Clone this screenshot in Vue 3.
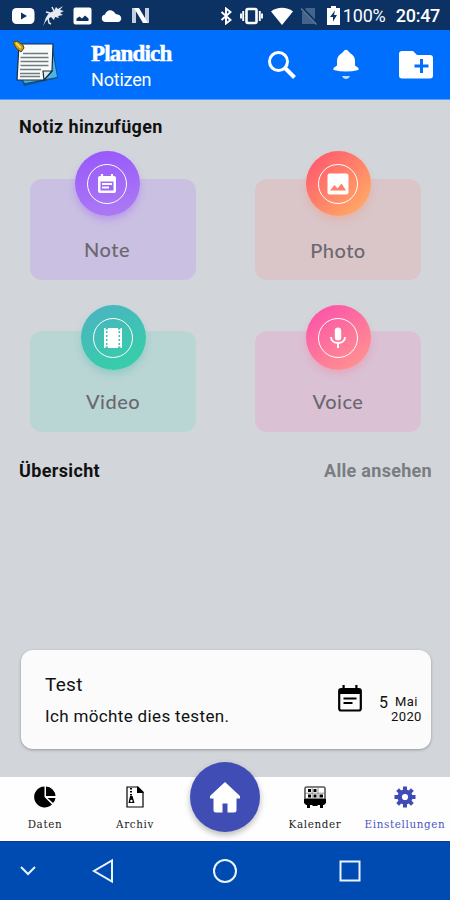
<template>
  <div class="phone">
    <div class="statusbar">
      <div class="status-left">
        <svg width="23" height="18" viewBox="0 0 23 18"><rect x="0" y="1" width="22.500" height="16" rx="4.500" fill="#fff" /><path d="M9 5.500v7l6-3.500z" fill="#0c3163" /></svg>
        <svg width="24" height="24" viewBox="0 0 24 24">
          <path d="M1 22C3 18 3 14 5 12C7 8 10 8 12 7L14 3L16 5L21 2L18 6L22 7L18 9L21 11L16 12L17 14L13 13L12 16L9 13L6 15L4 17Z" fill="#e6ebf2" />
          <path d="M6 14l1 5 2 1M8 9L4 8M12 7l-2-4" stroke="#e6ebf2" stroke-width="1.500" fill="none" />
        </svg>
        <svg width="19" height="18" viewBox="0 0 19 18"><rect x="0.500" y="0.500" width="18" height="17" rx="2" fill="#fff" /><path d="M3.500 14v-2.500l3-2 2.500 2 3-3 3.500 3V14z" fill="#0c3163" /></svg>
        <svg width="21" height="14" viewBox="0 0 21 14"><path d="M4 13a3.800 3.800 0 0 1 0-7.500C5.500 1 11-1 15 5.300c6 0 7 6.500 2.500 7.700z" fill="#fff" /></svg>
        <svg width="20" height="17" viewBox="0 0 20 17"><path d="M1 1h4v15H1zM14 1h4v15h-4z" fill="#c3cfdd" /><path d="M3 1h5l9 15h-5z" fill="#fff" /></svg>
      </div>
      <div class="status-right">
        <svg class="bt" width="12" height="18" viewBox="0 0 12 18"><path d="M1.500 5l9 8L6 16.500v-15L10.500 5l-9 8" fill="none" stroke="#fff" stroke-width="1.900" /></svg>
        <svg class="vib" width="23" height="18" viewBox="0 0 23 18"><rect x="6.500" y="2" width="10" height="14" rx="1.500" fill="none" stroke="#fff" stroke-width="2.600" /><path d="M3.200 4v10M1 6.500v5M19.800 4v10M22 6.500v5" stroke="#fff" stroke-width="1.900" /></svg>
        <svg class="wifi" width="22" height="18" viewBox="0 0 22 18"><path d="M0 4.500C6-.5 16-.5 22 4.500L11 18z" fill="#fff" /></svg>
        <svg class="sim" width="17" height="18" viewBox="0 0 17 18"><path d="M5 1h9v16H1V5z" fill="#46648b" /><path d="M1 1l15 16" stroke="#0c3163" stroke-width="3" /><path d="M0 1.500l15.500 16" stroke="#617a9b" stroke-width="1.500" /></svg>
        <svg class="bat" width="13" height="19" viewBox="0 0 13 19"><path d="M4 0h5v2h4v17H0V2h4z" fill="#fff" /><path d="M8 4.500L3 11h3v4.500L10 9H7z" fill="#0c3163" /></svg>
        <span class="percent">100%</span>
        <span class="clock">20:47</span>
      </div>
    </div>

    <header class="header">
      <svg class="logo" width="50" height="50" viewBox="0 0 50 50">
        <path d="M40 8l5 30-34 8-3-7z" fill="#1b4f80" />
        <path d="M39 9l5 28-32 6-3-4z" fill="#46b6ea" />
        <path d="M6 4h34l-1 27-8 9H4z" fill="#f7fcfb" stroke="#1c2c3d" stroke-width="1.200" />
        <path d="M31 40l-1-9 9 0z" fill="#dce9ec" stroke="#1c2c3d" stroke-width="1.200" />
        <path d="M10 13.500h25M7.500 17.500h28M7.500 21.500h28M7.500 25.500h28M7 29.500h21M7 33.500h20M7 36.500h20" stroke="#727a7e" stroke-width="1.300" />
        <path d="M0 2l4-1 6 4 1 3-3 4-5-4z" fill="#c99b10" stroke="#524713" stroke-width="1" />
        <path d="M3 3l5 5" stroke="#f6dc56" stroke-width="1.800" />
      </svg>
      <div class="titles">
        <div class="brand">Plandich</div>
        <div class="subtitle">Notizen</div>
      </div>
      <div class="actions">
        <svg width="30" height="30" viewBox="0 0 30 30" fill="none" stroke="#fff"><circle cx="11.500" cy="11.500" r="9" stroke-width="3" /><path d="M18 18l9.500 9.500" stroke-width="4" /></svg>
        <svg width="28" height="32" viewBox="0 0 28 32" fill="#fff"><path d="M14 .8c1.800 0 2.500 2 4 3.200C21 6 23 8 23 12v4.500l3.500 2.500v2Q20 22.500 14 22.500T1.500 21v-2L5 16.500V12c0-4 2-6 5-8 1.500-1.200 2.200-3.200 4-3.200z" /><path d="M10 27h8c-1.500 4-6.500 4-8 0z" fill="#bcdcff" /></svg>
        <svg width="36" height="30" viewBox="0 0 36 30"><path d="M4 1h11l4 4h13a3 3 0 0 1 3 3v17.500a3 3 0 0 1-3 3H4a3 3 0 0 1-3-3V4a3 3 0 0 1 3-3z" fill="#fff" /><path d="M23.500 9v14M16.500 16h14" stroke="#006ffd" stroke-width="3" /></svg>
      </div>
    </header>

    <main class="content">
      <h2 class="heading">Notiz hinzufügen</h2>
      <div class="tiles">
        <div v-for="tile in tiles" :key="tile.id" class="tile" :class="tile.id">
          <div class="bubble">
            <div class="ring">
              <svg v-if="tile.id === 'note'" width="20" height="22" viewBox="0 0 20 22"><path d="M3 3h14a2 2 0 0 1 2 2v13a2 2 0 0 1-2 2H3a2 2 0 0 1-2-2V5a2 2 0 0 1 2-2z" fill="#fff" /><path d="M5 1v4M15 1v4" stroke="#fff" stroke-width="2.200" /><path d="M3.500 8.500h13v9h-13z" fill="#a166f8" /><path d="M5 11h10M5 14.500h7" stroke="#fff" stroke-width="1.800" /></svg>
              <svg v-else-if="tile.id === 'photo'" width="22" height="22" viewBox="0 0 22 22"><rect x="0.500" y="0.500" width="21" height="21" rx="2" fill="#fff" /><path d="M3 17.500l4.500-5.500 3 3.500 4-5 4.500 7z" fill="#ff8066" /></svg>
              <svg v-else-if="tile.id === 'video'" width="18" height="20" viewBox="0 0 18 20"><path d="M0 0h1.500v1.500H4V0h10v1.500h2.500V0H18v20h-1.500v-1.500H14V20H4v-1.500H1.500V20H0z" fill="#fff" /><path d="M2.700 3v15M15.300 3v15" stroke="#3fc6b5" stroke-width="1.600" stroke-dasharray="2 2" /></svg>
              <svg v-else width="16" height="22" viewBox="0 0 16 22"><rect x="4.800" y="0.500" width="6.400" height="13" rx="3.200" fill="#fff" /><path d="M1 10c0 8 14 8 14 0M8 16v5" fill="none" stroke="#fff" stroke-width="1.900" /></svg>
            </div>
          </div>
          <span class="label">{{ tile.label }}</span>
        </div>
      </div>
      <div class="overview">
        <h2 class="heading">Übersicht</h2>
        <span class="all">Alle ansehen</span>
      </div>
      <article class="entry">
        <div class="entry-text">
          <div class="entry-title">Test</div>
          <div class="entry-body">Ich möchte dies testen.</div>
        </div>
        <svg class="entry-icon" width="24" height="27" viewBox="0 0 24 27"><rect x="1.200" y="4" width="21.600" height="21.500" rx="2" fill="none" stroke="#000" stroke-width="2.200" /><path d="M1 4h22v5H1zM4.500 0h2.200v4H4.500zM17.300 0h2.200v4h-2.200z" /><path d="M5.500 13.500h13M5.500 18h9" stroke="#000" stroke-width="2" /></svg>
        <span class="day">5</span>
        <div class="date"><span>Mai</span><span>2020</span></div>
      </article>
    </main>

    <nav class="tabs">
      <div class="tab">
        <svg width="22" height="22" viewBox="0 0 22 22"><path d="M10.500 .5V11l7.500 7.500A10.500 10.500 0 1 1 10.500 .5z" /><path d="M12 .5A10 10 0 0 1 21.500 10H12zM13.500 12h8a9 9 0 0 1-2.500 5z" /></svg>
        <span>Daten</span>
      </div>
      <div class="tab">
        <svg width="20" height="22" viewBox="0 0 20 22"><path d="M2 1h11l5 5v15H2z" fill="#fff" stroke="#000" stroke-width="1.200" /><path d="M12 0l7 7h-7z" /><path d="M6 2v10" stroke="#000" stroke-width="2" stroke-dasharray="1.500 1.500" /><path d="M5 10h2.500l2 7h-6z" /><circle cx="6.400" cy="15" r="1.200" fill="#fff" /></svg>
        <span>Archiv</span>
      </div>
      <div class="tab home">
        <div class="fab">
          <svg width="32" height="32" viewBox="0 0 32 32"><path d="M16 1L1 15v2.500h3.500V29a2.500 2.500 0 0 0 2.500 2.500h6.500v-9h5v9H25a2.500 2.500 0 0 0 2.500-2.500V17.500H31V15z" fill="#fff" /></svg>
        </div>
      </div>
      <div class="tab">
        <svg width="22" height="22" viewBox="0 0 22 22"><path d="M2.500 1h17a1.500 1.500 0 0 1 1.500 1.500V13H1V2.500A1.500 1.500 0 0 1 2.500 1z" fill="#fff" stroke="#555" stroke-width="1.600" /><path d="M4 3h3v3H4zM9.500 3h3v3h-3zM4 8.500h3v3H4zM9.500 8.500h3v3h-3zM15.500 8.500h3.500v3h-3.500zM0 13h22v4l-2 2h-1v3h-3v-3h-2l-1 1H9l-1-1H6v3H3v-3H2l-2-2z" /><path d="M8.200 2v11M14 2v11M2 7.200h18" stroke="#888" stroke-width="0.900" /></svg>
        <span>Kalender</span>
      </div>
      <div class="tab active">
        <svg width="22" height="22" viewBox="0 0 22 22"><g stroke="#3f4cb8" stroke-width="4"><path d="M11 .5v21M.5 11h21M3.600 3.600l14.800 14.800M3.600 18.400L18.400 3.600" /></g><circle cx="11" cy="11" r="7.600" fill="#3f4cb8" /><circle cx="11" cy="11" r="3.100" fill="#fff" /></svg>
        <span>Einstellungen</span>
      </div>
    </nav>

    <div class="sysnav">
      <svg class="sys-down" width="16" height="10" viewBox="0 0 16 10"><path d="M1 1l7 7 7-7" /></svg>
      <svg class="sys-back" width="22" height="26" viewBox="0 0 22 26"><path d="M20 2.500v21L2 13z" /></svg>
      <svg class="sys-home" width="26" height="26" viewBox="0 0 26 26"><circle cx="13" cy="13" r="11" /></svg>
      <svg class="sys-recent" width="22" height="22" viewBox="0 0 22 22"><rect x="1.500" y="1.500" width="19" height="19" /></svg>
    </div>
  </div>
</template>

<script setup>
const tiles = [
  { id: 'note', label: 'Note' },
  { id: 'photo', label: 'Photo' },
  { id: 'video', label: 'Video' },
  { id: 'voice', label: 'Voice' }
]
</script>

<style>
body {
  margin: 0;
  background: #d2d6db;
}
</style>

<style scoped>
/* ═══ Shell ═══ */
.phone {
  width: 450px;
  height: 900px;
  display: flex;
  flex-direction: column;
  overflow: hidden;
  background: #d2d6db;
  font-family: Roboto, sans-serif;
  color: #111;
}

svg {
  display: block;
  flex: none;
}

/* ═══ Status bar ═══ */
.statusbar {
  height: 30px;
  flex: none;
  display: flex;
  justify-content: space-between;
  align-items: center;
  box-sizing: border-box;
  padding: 1px 10px 0 12px;
  background: #0c3163;
  color: #fff;
}

.status-left,
.status-right {
  display: flex;
  align-items: center;
}

.status-left {
  gap: 9px;
}

.status-left svg:nth-child(2) {
  margin: 0 -2px 0 -2px;
}

.bt { margin-right: 8px; }
.vib { margin-right: 8px; }
.wifi { margin-right: 8px; }
.sim { margin-right: 9px; }
.bat { margin-right: 3px; }

.percent {
  font-size: 18px;
  line-height: 20px;
  letter-spacing: -0.2px;
  width: 53px;
}

.clock {
  font-size: 18px;
  line-height: 20px;
  font-weight: 500;
  letter-spacing: -0.3px;
}

/* ═══ Header ═══ */
.header {
  height: 70px;
  flex: none;
  display: flex;
  box-sizing: border-box;
  padding: 10px 16px 0 13px;
  border-bottom: 1px solid #5b9df0;
  background: #006ffd;
  color: #fff;
}

.titles {
  margin-left: 28px;
}

.brand {
  font: bold 23px/28px 'Liberation Serif', serif;
  letter-spacing: -0.8px;
  -webkit-text-stroke: 0.5px #fff;
}

.subtitle {
  margin-top: 1px;
  font-size: 18px;
  line-height: 22px;
  letter-spacing: -0.2px;
}

.actions {
  margin: 9px 0 0 auto;
  display: flex;
  align-items: center;
  height: 32px;
  gap: 35px;
}

.actions svg:nth-child(2) {
  margin-right: 3px;
}

/* ═══ Content ═══ */
.content {
  flex: 1;
  min-height: 0;
  display: flex;
  flex-direction: column;
}

.heading {
  margin: 0;
  font-size: 18px;
  line-height: 22px;
  font-weight: 700;
  letter-spacing: 0.35px;
}

.content > .heading {
  padding: 16px 0 0 19px;
}

.tiles {
  display: grid;
  grid-template-columns: 166px 166px;
  grid-template-rows: 101px 101px;
  gap: 51px 59px;
  margin: 41px 0 0 30px;
}

.tile {
  display: flex;
  flex-direction: column;
  align-items: center;
  border-radius: 12px;
}

.bubble {
  width: 65px;
  height: 65px;
  margin-top: -28px;
  display: flex;
  align-items: center;
  justify-content: center;
  border-radius: 50%;
}

.ring {
  width: 38px;
  height: 38px;
  display: flex;
  align-items: center;
  justify-content: center;
  border: 1.5px solid #fff;
  border-radius: 50%;
}

.label {
  margin-top: 21px;
  font-family: Lato, sans-serif;
  font-size: 20px;
  font-weight: 500;
  line-height: 24px;
  letter-spacing: 0.5px;
  color: #6b6870;
}

.note { background: #cac0e2; padding-right: 12px; width: 154px; }
.photo { background: #dac5c9; }
.video { background: #b9d5d4; }
.voice { background: #dac1d3; }

.note .bubble { background: linear-gradient(170deg, #9757fb, #ad7cf3); box-shadow: 0 4px 7px rgba(158, 100, 248, 0.4); }
.photo .bubble { background: linear-gradient(135deg, #ff5f6d 15%, #ffaa64 90%); box-shadow: 0 4px 7px rgba(255, 140, 100, 0.3); }
.video .bubble { background: linear-gradient(155deg, #49b5c0 10%, #36cfa8 90%); box-shadow: 0 4px 7px rgba(60, 180, 165, 0.3); }
.voice .bubble { background: linear-gradient(145deg, #fc58a7 15%, #ff9290 90%); box-shadow: 0 4px 7px rgba(255, 110, 150, 0.3); }

.photo .label { margin-top: 22px; }

.video .bubble,
.voice .bubble {
  margin-top: -26px;
}

.video .label,
.voice .label {
  margin-top: 19px;
}

.overview {
  display: flex;
  justify-content: space-between;
  margin: 28px 18px 0 19px;
}

.all {
  font-size: 18px;
  line-height: 22px;
  font-weight: 700;
  letter-spacing: 0.3px;
  color: #7a7d81;
}

.entry {
  height: 99px;
  display: flex;
  margin: auto 19px 28px 21px;
  border-radius: 12px;
  background: #fbfbfb;
  box-shadow: 0 1px 3px rgba(0, 0, 0, 0.3);
}

.entry-text {
  width: 317px;
  box-sizing: border-box;
  padding: 23px 0 0 24px;
}

.entry-title {
  font-size: 19px;
  line-height: 24px;
  letter-spacing: 0.3px;
}

.entry-body {
  margin-top: 8px;
  font-size: 17px;
  line-height: 22px;
  letter-spacing: 0.35px;
}

.entry-icon {
  margin-top: 35px;
}

.day {
  margin: 43px 0 0 17px;
  font-size: 16px;
  line-height: 20px;
}

.date {
  margin: 44px 0 0 3px;
  display: flex;
  flex-direction: column;
  align-items: center;
  font-size: 13px;
  line-height: 15px;
  letter-spacing: 0.4px;
}

/* ═══ Tabs ═══ */
.tabs {
  height: 64px;
  flex: none;
  display: grid;
  grid-template-columns: repeat(5, 90px);
  background: #fefefe;
}

.tab {
  display: flex;
  flex-direction: column;
  align-items: center;
  padding-top: 9px;
  font: 11.5px/16px 'DejaVu Serif Condensed', 'DejaVu Serif', serif;
  letter-spacing: 0.65px;
  color: #222;
}

.tab span {
  margin-top: 8px;
}

.tab.active {
  color: #4a54bd;
}

.home {
  padding-top: 0;
}

.fab {
  width: 70px;
  height: 70px;
  margin-top: -15px;
  flex: none;
  display: flex;
  align-items: center;
  justify-content: center;
  border-radius: 50%;
  background: #3f4db5;
  box-shadow: 0 3px 6px rgba(0, 0, 0, 0.28);
}

/* ═══ System navigation ═══ */
.sysnav {
  height: 59px;
  flex: none;
  display: flex;
  align-items: center;
  box-sizing: border-box;
  border-top: 1px solid #0a3c9f;
  background: #004bb1;
  z-index: 1;
}

.sysnav svg {
  fill: none;
  stroke: #eaf3ff;
  stroke-width: 2;
}

.sys-down { margin-left: 20px; }
.sys-back { margin-left: 56px; }
.sys-home { margin-left: 98px; }
.sys-recent { margin-left: 101px; }
</style>
